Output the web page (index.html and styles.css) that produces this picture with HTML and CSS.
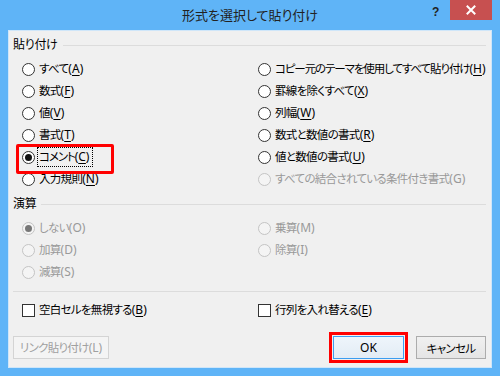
FILE: index.html
```html
<!DOCTYPE html>
<html lang="ja">
<head>
<meta charset="utf-8">
<link rel="stylesheet" href="styles.css">
</head>
<body>
<div class="window">
  <div class="titlebar">
    <div class="tb-spacer"></div>
    <div class="title">形式を選択して貼り付け</div>
    <div class="tb-controls">
      <span class="help">?</span>
      <span class="close"><svg width="10" height="10" viewBox="0 0 10 10"><path d="M1.5 1.5 L8.5 8.5 M8.5 1.5 L1.5 8.5" stroke="#fff" stroke-width="2" stroke-linecap="square"/></svg></span>
    </div>
  </div>
  <div class="client">
    <div class="group-head"><span>貼り付け</span><span class="rule"></span></div>
    <div class="grid paste">
      <div class="opt"><span class="radio"></span><span class="lbl">すべて<span class="k">(<u>A</u>)</span></span></div>
      <div class="opt"><span class="radio"></span><span class="lbl tight">コピー元のテーマを使用してすべて貼り付け<span class="k">(<u>H</u>)</span></span></div>
      <div class="opt"><span class="radio"></span><span class="lbl">数式<span class="k">(<u>F</u>)</span></span></div>
      <div class="opt"><span class="radio"></span><span class="lbl">罫線を除くすべて<span class="k">(<u>X</u>)</span></span></div>
      <div class="opt"><span class="radio"></span><span class="lbl">値<span class="k">(<u>V</u>)</span></span></div>
      <div class="opt"><span class="radio"></span><span class="lbl">列幅<span class="k">(<u>W</u>)</span></span></div>
      <div class="opt"><span class="radio"></span><span class="lbl">書式<span class="k">(<u>T</u>)</span></span></div>
      <div class="opt"><span class="radio"></span><span class="lbl">数式と数値の書式<span class="k">(<u>R</u>)</span></span></div>
      <div class="opt marked"><span class="radio checked"></span><span class="lbl focus tight">コメント<span class="k">(<u>C</u>)</span></span></div>
      <div class="opt"><span class="radio"></span><span class="lbl">値と数値の書式<span class="k">(<u>U</u>)</span></span></div>
      <div class="opt"><span class="radio"></span><span class="lbl">入力規則<span class="k">(<u>N</u>)</span></span></div>
      <div class="opt disabled"><span class="radio"></span><span class="lbl">すべての結合されている条件付き書式<span class="k">(G)</span></span></div>
    </div>
    <div class="group-head calc-head"><span>演算</span><span class="rule"></span></div>
    <div class="grid calc">
      <div class="opt disabled"><span class="radio checked"></span><span class="lbl">しない<span class="k">(O)</span></span></div>
      <div class="opt disabled"><span class="radio"></span><span class="lbl">乗算<span class="k">(M)</span></span></div>
      <div class="opt disabled"><span class="radio"></span><span class="lbl">加算<span class="k">(D)</span></span></div>
      <div class="opt disabled"><span class="radio"></span><span class="lbl">除算<span class="k">(I)</span></span></div>
      <div class="opt disabled"><span class="radio"></span><span class="lbl">減算<span class="k">(S)</span></span></div>
    </div>
    <div class="separator"></div>
    <div class="grid checks">
      <div class="opt"><span class="check"></span><span class="lbl">空白セルを無視する<span class="k">(<u>B</u>)</span></span></div>
      <div class="opt"><span class="check"></span><span class="lbl">行列を入れ替える<span class="k">(<u>E</u>)</span></span></div>
    </div>
    <div class="buttons">
      <button class="btn link" disabled>リンク貼り付け<span class="k">(L)</span></button>
      <div class="btn-spacer"></div>
      <button class="btn ok">OK</button>
      <button class="btn cancel">キャンセル</button>
    </div>
  </div>
</div>
</body>
</html>
```
FILE: styles.css
```css
* { box-sizing: border-box; }
html, body { margin: 0; padding: 0; }
body {
  font-family: "Noto Sans", "Noto Sans CJK JP", sans-serif;
  font-feature-settings: "palt";
  font-size: 11.5px;
  letter-spacing: -0.7px;
  color: #000;
}
.k { letter-spacing: 0; font-size: 12px; }
.window {
  width: 500px;
  height: 376px;
  background: #5fb4f7;
  display: flex;
  flex-direction: column;
}
.titlebar {
  height: 30px;
  display: flex;
  align-items: flex-start;
}
.tb-spacer { width: 70px; }
.title {
  flex: 1;
  text-align: center;
  font-size: 13px;
  letter-spacing: 0;
  line-height: 30px;
  color: #222;
}
.tb-controls {
  width: 70px;
  display: flex;
  align-items: flex-start;
  padding-right: 8px;
}
.help {
  width: 20px;
  padding-left: 2px;
  font-family: "Liberation Sans", sans-serif;
  font-weight: bold;
  font-size: 12px;
  letter-spacing: 0;
  line-height: 24px;
  color: #222;
}
.close {
  width: 42px;
  height: 20px;
  background: #c75050;
  display: flex;
  align-items: center;
  justify-content: center;
}
.close svg { display: block; }
.client {
  flex: 1;
  margin: 0 8px 8px;
  background: #f0f0f0;
  border: 1px solid #cfe6f9;
  padding: 5px 5px 0 4px;
  display: flex;
  flex-direction: column;
}
.group-head {
  display: flex;
  align-items: center;
  height: 18px;
  line-height: 18px;
  font-size: 12px;
  letter-spacing: -0.3px;
}
.rule {
  flex: 1;
  border-top: 1px solid #dcdcdc;
  margin-left: 5px;
  margin-top: 1px;
}
.calc-head { margin-top: 5px; }
.grid {
  display: grid;
  grid-template-columns: 236px 1fr;
  padding-left: 9px;
  margin-top: 4px;
}
.opt {
  height: 22px;
  display: flex;
  align-items: center;
  gap: 3px;
  white-space: nowrap;
}
.lbl { line-height: 18px; padding: 0 1px; }
.lbl.tight { letter-spacing: -1.1px; }
.lbl.tight .k { letter-spacing: 0; }
.lbl u { text-underline-offset: 2px; }
.radio {
  width: 13px;
  height: 13px;
  border: 1px solid #333;
  border-radius: 50%;
  background: #fff;
  display: flex;
  align-items: center;
  justify-content: center;
  flex: none;
}
.radio.checked::after {
  content: "";
  width: 7px;
  height: 7px;
  border-radius: 50%;
  background: #111;
}
.disabled { color: #999; }
.disabled .radio { border-color: #c4c4c4; background: #f4f4f4; }
.disabled .radio.checked::after { background: #777; }
.marked { position: relative; }
.marked::after {
  content: "";
  position: absolute;
  left: -6px;
  top: -2px;
  width: 92px;
  height: 24px;
  border: 3px solid #f00;
  border-radius: 2px;
}
.focus { outline: 1px dotted #000; outline-offset: 0; padding: 0 3px 0 1px; }
.separator {
  border-top: 1px solid #dcdcdc;
  margin-top: 8px;
}
.checks { margin-top: 7px; }
.check {
  width: 13px;
  height: 13px;
  border: 1px solid #333;
  background: #fff;
  flex: none;
}
.buttons {
  display: flex;
  margin-top: 15px;
  gap: 12px;
  align-items: flex-start;
}
.btn-spacer { flex: 1; }
.btn {
  height: 23px;
  font-family: inherit;
  font-feature-settings: "palt";
  font-size: 11.5px;
  letter-spacing: -0.7px;
  color: #000;
  background: linear-gradient(#f0f0f0, #e5e5e5);
  border: 1px solid #acacac;
  border-radius: 0;
  padding: 0;
  margin: 0;
}
.link {
  width: 96px;
  color: #a0a0a0;
  background: #f4f4f4;
  border-color: #d4d4d4;
}
.ok {
  width: 71px;
  border-color: #3c9df0;
  background: linear-gradient(#eef5fb, #e3ecf5);
  outline: 3px solid #f00;
  outline-offset: 1px;
  letter-spacing: 0;
  font-size: 12px;
}
.cancel { width: 70px; }
```
